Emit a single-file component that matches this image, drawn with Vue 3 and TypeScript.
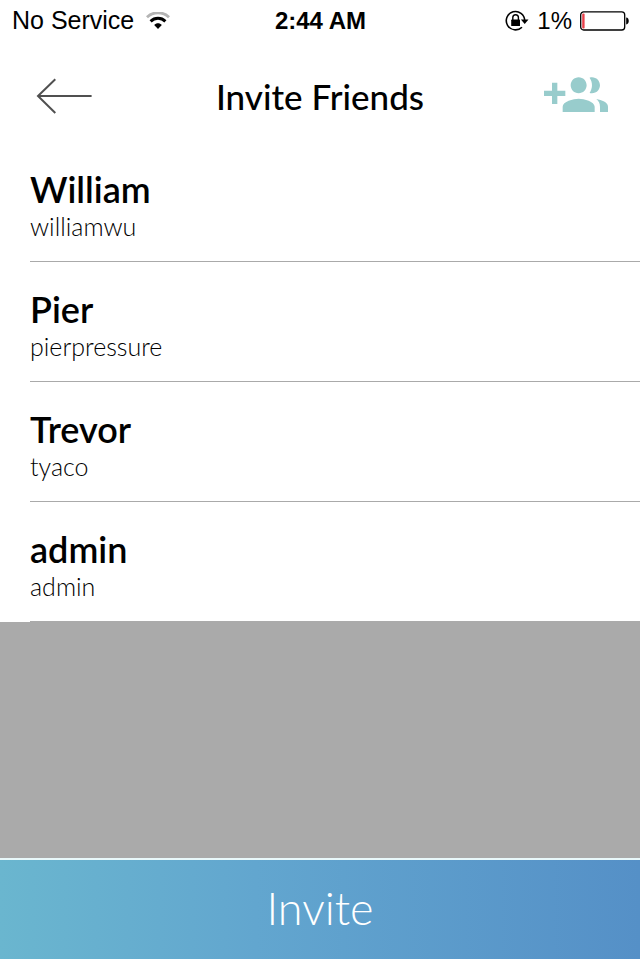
<script setup lang="ts">
import { ref } from 'vue'

interface Friend {
  name: string
  username: string
}

const friends: Friend[] = [
  { name: 'William', username: 'williamwu' },
  { name: 'Pier', username: 'pierpressure' },
  { name: 'Trevor', username: 'tyaco' },
  { name: 'admin', username: 'admin' },
]

const selected = ref<string[]>([])

function toggle(name: string): void {
  selected.value = selected.value.includes(name)
    ? selected.value.filter((n) => n !== name)
    : [...selected.value, name]
}
</script>

<template>
  <div class="screen">
    <div class="status">
      <div class="status-side">
        <span class="carrier">No Service</span>
        <svg width="24" height="18" viewBox="0 0 24 18" aria-hidden="true">
          <path d="M1 5.2C7-.7 17-.7 23 5.2" fill="none" stroke="#b4b4b4" stroke-width="2.8" />
          <path d="M4.6 9.3c4.2-4 10.6-4 14.8 0" fill="none" stroke="#000" stroke-width="3" />
          <path d="M8.2 12.9c2.2-2.2 5.4-2.2 7.6 0L12 17z" />
        </svg>
      </div>
      <span class="time">2:44 AM</span>
      <div class="status-side end">
        <svg width="24" height="22" viewBox="0 0 24 22" aria-hidden="true">
          <path d="M19.7 10.5A9.2 9.2 0 1 0 17 17.2" fill="none" stroke="#000" stroke-width="1.6" />
          <path d="M15.9 9.6h7.6l-3.8 4.4z" />
          <rect x="6.2" y="9.6" width="8.8" height="6.4" rx=".6" />
          <path d="M7.8 10V7.6a2.8 2.8 0 0 1 5.6 0V10" fill="none" stroke="#000" stroke-width="1.4" />
        </svg>
        <span>1%</span>
        <svg width="49" height="20" viewBox="0 0 49 20" aria-hidden="true">
          <rect x=".7" y=".8" width="44" height="18.2" rx="3" fill="none" stroke="#000" stroke-width="1.3" />
          <rect x="2.2" y="2.4" width="2.4" height="15" rx="1" fill="#e8404a" />
          <path d="M46.2 6.6c3.4 0 3.4 6.8 0 6.8z" />
        </svg>
      </div>
    </div>

    <header class="bar">
      <button class="icon-button" type="button" aria-label="Back">
        <svg width="64" height="64" viewBox="0 0 64 64" aria-hidden="true">
          <path d="M23.3 15.3 6 32l17.3 17M6 32h53.6" fill="none" stroke="#505050" stroke-width="2" />
        </svg>
      </button>
      <h1>Invite Friends</h1>
      <button class="icon-button" type="button" aria-label="Add friends">
        <svg width="64" height="64" viewBox="0 0 24 24" fill="#98cccc" aria-hidden="true">
          <path d="M8 10H5V7H3v3H0v2h3v3h2v-3h3v-2zm10 1c1.66 0 2.99-1.34 2.99-3S19.66 5 18 5c-.32 0-.63.05-.91.14.57.81.9 1.79.9 2.86s-.34 2.04-.9 2.86c.28.09.59.14.91.14zm-5 0c1.66 0 2.99-1.34 2.99-3S14.66 5 13 5c-1.66 0-3 1.34-3 3s1.34 3 3 3zm6.62 2.16c.83.73 1.38 1.66 1.38 2.84v2h3v-2c0-1.54-2.37-2.49-4.38-2.84zM13 13c-2 0-6 1-6 3v2h12v-2c0-2-4-3-6-3z" />
        </svg>
      </button>
    </header>

    <ul class="list">
      <li v-for="friend in friends" :key="friend.name">
        <button
          class="row"
          type="button"
          :aria-pressed="selected.includes(friend.name)"
          @click="toggle(friend.name)"
        >
          <span class="name">{{ friend.name }}</span>
          <span class="username">{{ friend.username }}</span>
        </button>
      </li>
    </ul>

    <div class="filler"></div>
    <button class="invite" type="button">Invite</button>
  </div>
</template>

<style>
body {
  margin: 0;
}
</style>

<style scoped>
.screen {
  display: flex;
  flex-direction: column;
  min-height: 100vh;
  box-sizing: border-box;
  padding-bottom: 1px;
  background: #fff;
  color: #000;
  font-family: Lato, sans-serif;
}

button {
  margin: 0;
  padding: 0;
  border: 0;
  background: none;
  color: inherit;
  font-family: inherit;
  cursor: pointer;
}

svg {
  display: block;
}

.status {
  display: grid;
  grid-template-columns: 1fr auto 1fr;
  align-items: center;
  height: 41px;
  box-sizing: border-box;
  padding: 0 11px 0 12px;
  font: 24px/41px "Liberation Sans", sans-serif;
}

.status-side {
  display: flex;
  align-items: center;
  gap: 12px;
}

.carrier {
  font-size: 25px;
}

.end {
  gap: 8px;
  justify-content: flex-end;
}

.time {
  font-weight: 700;
  font-size: 24px;
}

.bar {
  display: grid;
  grid-template-columns: 64px 1fr 64px;
  align-items: center;
  padding: 23px 32px 14px;
}

h1 {
  margin: 0;
  font-size: 35px;
  font-weight: 500;
  line-height: 48px;
  text-align: center;
}

.list {
  margin: 0;
  padding: 0;
  list-style: none;
}

li {
  padding-left: 30px;
}

.row {
  display: flex;
  flex-direction: column;
  width: 100%;
  height: 120px;
  box-sizing: border-box;
  padding-top: 27px;
  border-bottom: 1px solid #aaa;
  text-align: left;
}

.name {
  font-size: 36px;
  font-weight: 600;
  line-height: 40px;
}

.username {
  font-size: 25px;
  font-weight: 300;
  line-height: 34px;
}

.filler {
  flex: 1;
  background: #aaa;
}

.invite {
  height: 101px;
  padding-bottom: 4px;
  border-top: 2px solid #e9f8fa;
  background: linear-gradient(90deg, #6ab6cf, #62a6cf 40%, #5590c7);
  color: #fff;
  font-size: 45px;
  font-weight: 300;
}
</style>
